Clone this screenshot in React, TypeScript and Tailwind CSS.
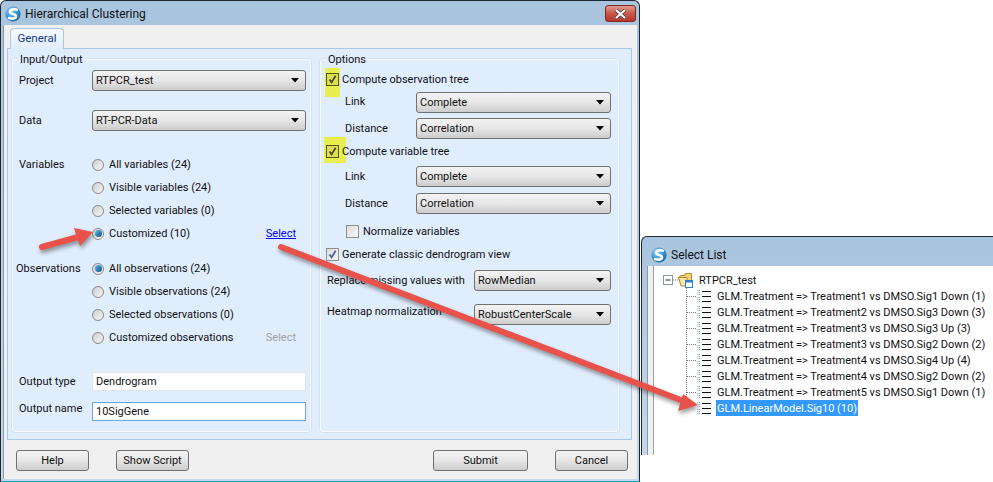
import React from "react";

const font = { fontFamily: 'Roboto, "Liberation Sans", Arial, sans-serif' };

function Logo({ id }: { id: string }) {
  return (
    <svg width="16" height="16" viewBox="0 0 16 16" className="shrink-0">
      <defs>
        <radialGradient id={id} cx="0.35" cy="0.3" r="0.8">
          <stop offset="0" stopColor="#8fd0f4" />
          <stop offset="0.6" stopColor="#2f8fcf" />
          <stop offset="1" stopColor="#14609c" />
        </radialGradient>
      </defs>
      <circle cx="8" cy="8" r="7.6" fill={`url(#${id})`} />
      <path d="M11.8 3.6C9 2.6 5 3.4 5 5.8c0 2.6 6 1.8 6 4.4 0 2.4-3.6 3-7 1.8" fill="none" stroke="#fff" strokeWidth="2.6" strokeLinecap="round" />
    </svg>
  );
}

function Combo({ value, className }: { value: string; className: string }) {
  return (
    <div className={`flex items-center justify-between h-[21px] shrink-0 rounded-[3px] border border-[#707070] bg-gradient-to-b from-[#f3f3f3] via-[#e6e6e6] to-[#cdcdcd] pl-[3px] pr-[6px] text-[11px] text-[#111] ${className}`}>
      <span className="pt-[2px]">{value}</span>
      <svg width="8" height="5" viewBox="0 0 8 5"><path d="M0 0h8L4 4.5z" fill="#000" /></svg>
    </div>
  );
}

function Btn({ label, className }: { label: string; className: string }) {
  return (
    <div className={`flex items-center justify-center h-[21px] pt-[2px] rounded-[3px] border border-[#707070] bg-gradient-to-b from-[#f3f3f3] via-[#e6e6e6] to-[#cdcdcd] text-[11px] text-[#111] ${className}`}>
      {label}
    </div>
  );
}

function Radio({ on }: { on?: boolean }) {
  return (
    <span className="flex items-center justify-center w-[12px] h-[12px] shrink-0 rounded-full border border-[#8b8b8b] bg-gradient-to-br from-[#d0d0d0] to-[#f6f6f6]">
      {on && <span className="w-[7px] h-[7px] rounded-full bg-gradient-to-br from-[#5cc0ec] to-[#0a4c86]" />}
    </span>
  );
}

function RadioRow({ label, on, side, link, dim, tight }: { label: string; on?: boolean; side?: string; link?: boolean; dim?: boolean; tight?: boolean }) {
  return (
    <div className="flex items-center h-[23px]">
      <span className={`w-[79px] pt-[2px] shrink-0 whitespace-nowrap ${tight ? "pl-[3px]" : "pl-[6px]"}`}>{side}</span>
      <Radio on={on} />
      <span className="ml-[5px] pt-[2px]">{label}</span>
      {link && <span className="ml-auto mr-[10px] pt-[2px] text-[#0000ee] underline">Select</span>}
      {dim && <span className="ml-auto mr-[10px] pt-[2px] text-[#a0a0a0]">Select</span>}
    </div>
  );
}

function Check({ mark, tone }: { mark?: boolean; tone: "yellow" | "plain" }) {
  const box =
    tone === "yellow"
      ? "border-[#55551a] bg-[#dcdf52]"
      : "border-[#8e8f8f] bg-gradient-to-br from-[#dcdcdc] to-[#f8f8f8]";
  return (
    <span className={`relative flex items-center justify-center w-[13px] h-[13px] shrink-0 border ${box}`}>
      {mark && (
        <svg width="11" height="11" viewBox="0 0 11 11">
          <path d="M2.5 5.5 4.6 8.4 8.6 1.8" fill="none" stroke={tone === "yellow" ? "#4e4e12" : "#4a5fae"} strokeWidth="1.8" />
        </svg>
      )}
    </span>
  );
}

function ListGlyph({ last }: { last?: boolean }) {
  return (
    <svg width="26" height="16" viewBox="0 0 26 16" className="shrink-0">
      <path d={last ? "M0.5 0V4" : "M0.5 0V16"} stroke="#777" strokeDasharray="1 1" />
      {!last && <path d="M1 8.5H11" stroke="#777" strokeDasharray="1 1" />}
      <path d="M11.5 2.5h3M11.5 4.5h3M11.5 6.5h3M11.5 9.5h3M11.5 11.5h3M11.5 13.5h3" stroke="#7aa4dc" strokeDasharray="1 0.6" />
      <path d="M16 3.5h9M16 8.5h9M16 13.5h9" stroke="#111" />
    </svg>
  );
}

function Folder() {
  return (
    <svg width="15" height="16" viewBox="0 0 15 16" className="shrink-0">
      <path d="M0.5 5.5 3 3.5H7V1.5H13.5V12H3z" fill="#f6d37a" stroke="#b98a2e" />
      <path d="M0.5 5.5H9V14H3z" fill="#fbe6a8" stroke="#b98a2e" />
      <rect x="7.5" y="8.5" width="7" height="7" fill="#fff" stroke="#2f7fd0" />
      <rect x="7.5" y="8.5" width="7" height="2" fill="#2f7fd0" />
    </svg>
  );
}

const items = [
  "GLM.Treatment => Treatment1 vs DMSO.Sig1 Down (1)",
  "GLM.Treatment => Treatment2 vs DMSO.Sig3 Down (3)",
  "GLM.Treatment => Treatment3 vs DMSO.Sig3 Up (3)",
  "GLM.Treatment => Treatment3 vs DMSO.Sig2 Down (2)",
  "GLM.Treatment => Treatment4 vs DMSO.Sig4 Up (4)",
  "GLM.Treatment => Treatment4 vs DMSO.Sig2 Down (2)",
  "GLM.Treatment => Treatment5 vs DMSO.Sig1 Down (1)",
];

function Dialog() {
  return (
    <div className="flex flex-col w-[640px] h-[482px] shrink-0 rounded-t-[6px] border border-[#1c2730] border-b-[#13a0b4] bg-gradient-to-b from-[#a9c4de] to-[#c4d8ea]">
      <div className="flex items-center h-[24px] shrink-0 pl-[4px] pt-[1px] text-[12px] text-[#111]">
        <Logo id="logoA" />
        <span className="ml-[4px]">Hierarchical Clustering</span>
        <div className="flex items-center justify-center ml-auto mr-[3px] w-[31px] h-[17px] rounded-[3px] border border-[#7a2a22] bg-gradient-to-b from-[#e39a90] via-[#c9574b] to-[#b8372b]">
          <svg width="13" height="10" viewBox="0 0 13 10">
            <path d="M2 1 11 9M11 1 2 9" stroke="#3a3a3a" strokeWidth="3.4" />
            <path d="M2 1 11 9M11 1 2 9" stroke="#fff" strokeWidth="2.2" />
          </svg>
        </div>
      </div>
      <div className="flex flex-col flex-1 mx-[2px] mb-[2px] border-l border-[#8d9aa6] bg-[#f0f0f0]">
        <div className="flex h-[23px] shrink-0 pl-[6px] pt-[3px] relative z-10">
          <div className="flex items-center justify-center w-[54px] h-[21px] rounded-t-[4px] border border-b-0 border-[#a9c7ea] bg-gradient-to-b from-[#f7fafe] to-[#e0edfd] text-[11.5px] text-[#1c3a8c]">General</div>
        </div>
        <div className="flex gap-[9px] w-[625px] h-[392px] ml-[3px] pt-[10px] pl-[4px] border border-[#a9c7ea] bg-[#e0edfd] text-[11px] text-[#111]">
          <div className="relative flex flex-col w-[299px] h-[373px] pt-[10px] rounded-[3px] border border-[#f6f9fd] shadow-[0_0_0_0.5px_#cfd8e2]">
            <span className="absolute -top-[8px] left-[5px] px-[2px] bg-[#e0edfd]">Input/Output</span>
            <div className="flex items-center">
              <span className="w-[79px] pl-[6px] pt-[2px] shrink-0">Project</span>
              <Combo value="RTPCR_test" className="w-[214px]" />
            </div>
            <div className="flex items-center mt-[19px]">
              <span className="w-[79px] pl-[6px] pt-[2px] shrink-0">Data</span>
              <Combo value="RT-PCR-Data" className="w-[214px]" />
            </div>
            <div className="mt-[22px] pr-[4px]">
              <RadioRow side="Variables" label="All variables (24)" />
              <RadioRow label="Visible variables (24)" />
              <RadioRow label="Selected variables (0)" />
              <RadioRow on label="Customized (10)" link />
            </div>
            <div className="mt-[12px] pr-[4px]">
              <RadioRow on tight side="Observations" label="All observations (24)" />
              <RadioRow label="Visible observations (24)" />
              <RadioRow label="Selected observations (0)" />
              <RadioRow label="Customized observations" dim />
            </div>
            <div className="flex items-center mt-[23px]">
              <span className="w-[79px] pl-[6px] pt-[2px] shrink-0">Output type</span>
              <div className="flex items-center w-[214px] h-[19px] px-[3px] pt-[2px] border border-[#e2e3ea] bg-white">Dendrogram</div>
            </div>
            <div className="flex items-center mt-[11px]">
              <span className="w-[79px] pl-[6px] -mt-[4px] shrink-0">Output name</span>
              <div className="flex items-center w-[214px] h-[19px] px-[3px] pt-[2px] border border-[#6fa8d8] bg-white">10SigGene</div>
            </div>
          </div>
          <div className="relative flex flex-col w-[299px] h-[373px] pt-[9px] rounded-[3px] border border-[#f6f9fd] shadow-[0_0_0_0.5px_#cfd8e2]">
            <span className="absolute -top-[8px] left-[5px] px-[2px] bg-[#e0edfd]">Options</span>
            <div className="relative flex items-center h-[20px] pl-[5px]">
              <span className="absolute left-[4px] -top-[1px] w-[15px] h-[29px] bg-[#e8ee50]" />
              <Check mark tone="yellow" />
              <span className="relative ml-[3px] pt-[2px]">Compute observation tree</span>
            </div>
            <div className="flex items-center mt-[3px] pl-[24px]">
              <span className="w-[71px] shrink-0">Link</span>
              <Combo value="Complete" className="w-[195px]" />
            </div>
            <div className="flex items-center mt-[5px] pl-[24px]">
              <span className="w-[71px] pt-[2px] shrink-0">Distance</span>
              <Combo value="Correlation" className="w-[195px]" />
            </div>
            <div className="relative flex items-center h-[20px] mt-[2px] pl-[5px]">
              <span className="absolute left-[3px] -top-[4px] w-[22px] h-[26px] bg-[#e8ee50]" />
              <Check mark tone="yellow" />
              <span className="relative ml-[3px] pt-[2px]">Compute variable tree</span>
            </div>
            <div className="flex items-center mt-[5px] pl-[24px]">
              <span className="w-[71px] pt-[2px] shrink-0">Link</span>
              <Combo value="Complete" className="w-[195px]" />
            </div>
            <div className="flex items-center mt-[6px] pl-[24px]">
              <span className="w-[71px] pt-[2px] shrink-0">Distance</span>
              <Combo value="Correlation" className="w-[195px]" />
            </div>
            <div className="flex items-center h-[20px] mt-[7px] pl-[25px]">
              <Check tone="plain" />
              <span className="ml-[4px] pt-[2px]">Normalize variables</span>
            </div>
            <div className="flex items-center h-[20px] mt-[3px] pl-[5px]">
              <Check mark tone="plain" />
              <span className="ml-[3px] pt-[2px]">Generate classic dendrogram view</span>
            </div>
            <div className="flex items-center mt-[6px] pl-[6px]">
              <span className="w-[147px] pt-[2px] shrink-0 whitespace-nowrap">Replace missing values with</span>
              <Combo value="RowMedian" className="w-[137px]" />
            </div>
            <div className="flex items-center mt-[13px] pl-[6px]">
              <span className="w-[147px] shrink-0 whitespace-nowrap -mt-[4px]">Heatmap normalization</span>
              <Combo value="RobustCenterScale" className="w-[137px]" />
            </div>
          </div>
        </div>
        <div className="flex items-center mt-[10px] pl-[12px]">
          <Btn label="Help" className="w-[73px]" />
          <Btn label="Show Script" className="w-[73px] ml-[27px]" />
          <Btn label="Submit" className="w-[95px] ml-[244px]" />
          <Btn label="Cancel" className="w-[73px] ml-[27px]" />
        </div>
      </div>
    </div>
  );
}

function SelectList() {
  return (
    <div className="flex flex-col flex-1 h-[219px] ml-[1px] mt-[236px] rounded-tl-[6px] border-t border-l border-[#1c2730] bg-gradient-to-b from-[#a9c4de] to-[#c4d8ea]">
      <div className="flex items-center h-[29px] shrink-0 pl-[9px] pt-[6px] text-[12px] text-[#111]">
        <Logo id="logoB" />
        <span className="ml-[4px]">Select List</span>
      </div>
      <div className="flex flex-1 ml-[5px] border-l border-[#8d9aa6] bg-[#f0f0f0] pl-[5px]">
        <div className="flex-1 border-l border-[#9aa3ad] bg-white pt-[6px] text-[11px] text-[#111]">
          <div className="flex items-center h-[16px] pl-[9px]">
            <svg width="15" height="16" viewBox="0 0 15 16" className="shrink-0">
              <rect x="0.5" y="3.5" width="9" height="9" fill="#fff" stroke="#8a98a8" />
              <path d="M2.5 8H7.5" stroke="#222" />
              <path d="M10 8H15" stroke="#777" strokeDasharray="1 1" />
            </svg>
            <Folder />
            <span className="ml-[6px] pt-[2px]">RTPCR_test</span>
          </div>
          {items.map((t) => (
            <div key={t} className="flex items-center h-[16px] pl-[32px]">
              <ListGlyph />
              <span className="ml-[5px] pt-[2px] whitespace-nowrap">{t}</span>
            </div>
          ))}
          <div className="flex items-center h-[16px] pl-[32px]">
            <ListGlyph last />
            <span className="ml-[4px] px-[1px] pt-[2px] h-[16px] flex items-center whitespace-nowrap bg-[#3399ff] text-white">GLM.LinearModel.Sig10 (10)</span>
          </div>
        </div>
      </div>
    </div>
  );
}

export default function App() {
  return (
    <div className="relative flex w-[993px] h-[482px] overflow-hidden bg-white" style={font}>
      <Dialog />
      <SelectList />
      <svg width="993" height="482" viewBox="0 0 993 482" className="absolute inset-0 pointer-events-none drop-shadow-[1px_3px_2px_rgba(0,0,0,0.4)]">
        <path d="M42 247 78 237" stroke="#e8524a" strokeWidth="6" strokeLinecap="round" />
        <path d="M93 232 74 228 80 246z" fill="#e8524a" />
        <path d="M281 247 686 402" stroke="#e8524a" strokeWidth="6" strokeLinecap="round" />
        <path d="M698 405 683 394 678 411z" fill="#e8524a" />
      </svg>
    </div>
  );
}
